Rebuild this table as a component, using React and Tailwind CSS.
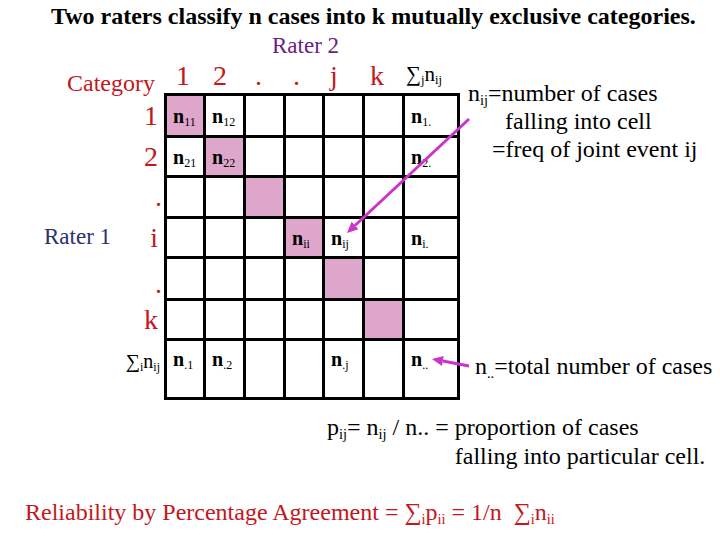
import React from "react";

const RED = "text-[#c4161c]";

// row heights of the contingency table (cells only, 3px black rules between)
const ROW_H = ["h-[39px]", "h-[37px]", "h-[38px]", "h-[37px]", "h-[39px]", "h-[37px]", "h-[56px]"];

const cells = [
  [["n", "11"], ["n", "12"], null, null, null, null, ["n", "1."]],
  [["n", "21"], ["n", "22"], null, null, null, null, ["n", "2."]],
  [null, null, null, null, null, null, null],
  [null, null, null, ["n", "ii"], ["n", "ij"], null, ["n", "i."]],
  [null, null, null, null, null, null, null],
  [null, null, null, null, null, null, null],
  [["n", ".1"], ["n", ".2"], null, null, ["n", ".j"], null, ["n", ".."]],
];

const Sub = ({ children, className = "" }) => (
  <sub className={`text-[0.6em] ${className}`}>{children}</sub>
);

const SumHead = () => (
  <span className="text-[21px] text-black">
    ∑<Sub>j</Sub>n<Sub>ij</Sub>
  </span>
);

const SumRow = () => (
  <span className="text-[20px] text-black">
    ∑<Sub>i</Sub>n<Sub>ij</Sub>
  </span>
);

const Table = () => (
  <div className="grid grid-cols-[36px_37px_37px_36px_37px_37px_52px] gap-[3px] bg-black p-[3px]">
    {cells.map((row, r) =>
      row.map((c, col) => {
        const pink = r === col && r < 6;
        const last = r === 6;
        return (
          <div
            key={`${r}-${col}`}
            className={`${ROW_H[r]} flex pl-[6px] ${last ? "items-start pt-[8px]" : "items-center"} ${
              pink ? "bg-[#dea6ca]" : "bg-white"
            }`}
          >
            {c && (
              <span className="text-[20px] leading-none text-black">
                <span className="font-bold">{c[0]}</span>
                <sub className="text-[12px]">{c[1]}</sub>
              </span>
            )}
          </div>
        );
      })
    )}
  </div>
);

const labels = ["1", "2", ".", "i", ".", "k"];

export default function App() {
  return (
    <div className="relative w-[720px] h-[540px] overflow-hidden bg-white font-['Liberation_Serif',serif] text-black">
      <h1 className="pl-[51px] pt-[3px] text-[24px] font-bold leading-[26px] whitespace-nowrap">
        Two raters classify n cases into k mutually exclusive categories.
      </h1>
      <div className="mt-[6px] pl-[272px] text-[23px] leading-[22px] text-[#6b2080]">Rater 2</div>

      <div className="flex">
        {/* row labels */}
        <div className="w-[164px] flex flex-col">
          <div className={`h-[36px] flex items-end justify-end pr-[9px] text-[24px] leading-[20px] ${RED}`}>
            Category
          </div>
          <div className="flex flex-col gap-[3px] pt-[3px]">
            {labels.map((l, i) => (
              <div
                key={i}
                className={`${ROW_H[i]} flex justify-between ${i === 4 ? "items-end" : "items-center"} pr-[6px]`}
              >
                <span className="pl-[44px] text-[23px] text-[#2d2f6e]">{i === 3 ? "Rater 1" : ""}</span>
                <span className={`text-[28px] leading-[28px] ${RED} ${l === "." ? "-mr-[4px]" : ""}`}>{l}</span>
              </div>
            ))}
            <div className={`${ROW_H[6]} flex items-start justify-end pt-[5px] pr-[4px]`}>
              <SumRow />
            </div>
          </div>
        </div>

        {/* table with column heads */}
        <div className="w-[296px] flex flex-col">
          <div className={`h-[36px] grid grid-cols-[36px_37px_37px_36px_37px_37px_52px] gap-[3px] px-[3px] items-end pb-[3px] text-[28px] leading-[28px] ${RED}`}>
            <span className="pl-[9px]">1</span>
            <span className="pl-[7px]">2</span>
            <span className="pl-[9px]">.</span>
            <span className="pl-[7px]">.</span>
            <span className="pl-[5px]">j</span>
            <span className="pl-[5px]">k</span>
            <span className="pl-[1px] pb-[6px] leading-[20px]">
              <SumHead />
            </span>
          </div>
          <Table />
        </div>

        {/* notes */}
        <div className="flex-1 flex flex-col pt-[22px] text-[24px] leading-[28px] whitespace-nowrap">
          <div className="pl-[8px]">
            n<Sub>ij</Sub>=number of cases
          </div>
          <div className="pl-[45px]">falling into cell</div>
          <div className="pl-[32px]">=freq of joint event ij</div>
          <div className="mt-[189px] pl-[15px]">
            n<Sub>..</Sub>=total number of cases
          </div>
        </div>
      </div>

      <div className="mt-[13px] pl-[327px] flex text-[24px] leading-[29px] whitespace-nowrap">
        <span className="pr-[6px]">
          p<Sub>ij</Sub>= n<Sub>ij</Sub> / n.. =
        </span>
        <div className="flex flex-col">
          <span>proportion of cases</span>
          <span>falling into particular cell.</span>
        </div>
      </div>

      <div className={`mt-[27px] pl-[25px] text-[24px] leading-[28px] whitespace-nowrap ${RED}`}>
        Reliability by Percentage Agreement = ∑<Sub>i</Sub>p<Sub>ii</Sub> = 1/n &nbsp;∑<Sub>i</Sub>n<Sub>ii</Sub>
      </div>

      {/* pointer arrows */}
      <svg className="absolute inset-0 pointer-events-none" width="720" height="540" viewBox="0 0 720 540">
        <line x1="469" y1="119" x2="355" y2="225.5" stroke="#cc33cc" strokeWidth="3" />
        <polygon points="347,233 358.4,229.2 351.6,221.8" fill="#cc33cc" />
        <line x1="469" y1="366" x2="442.8" y2="361" stroke="#cc33cc" strokeWidth="3" />
        <polygon points="432,359 443.7,356.1 441.9,365.9" fill="#cc33cc" />
      </svg>
    </div>
  );
}
